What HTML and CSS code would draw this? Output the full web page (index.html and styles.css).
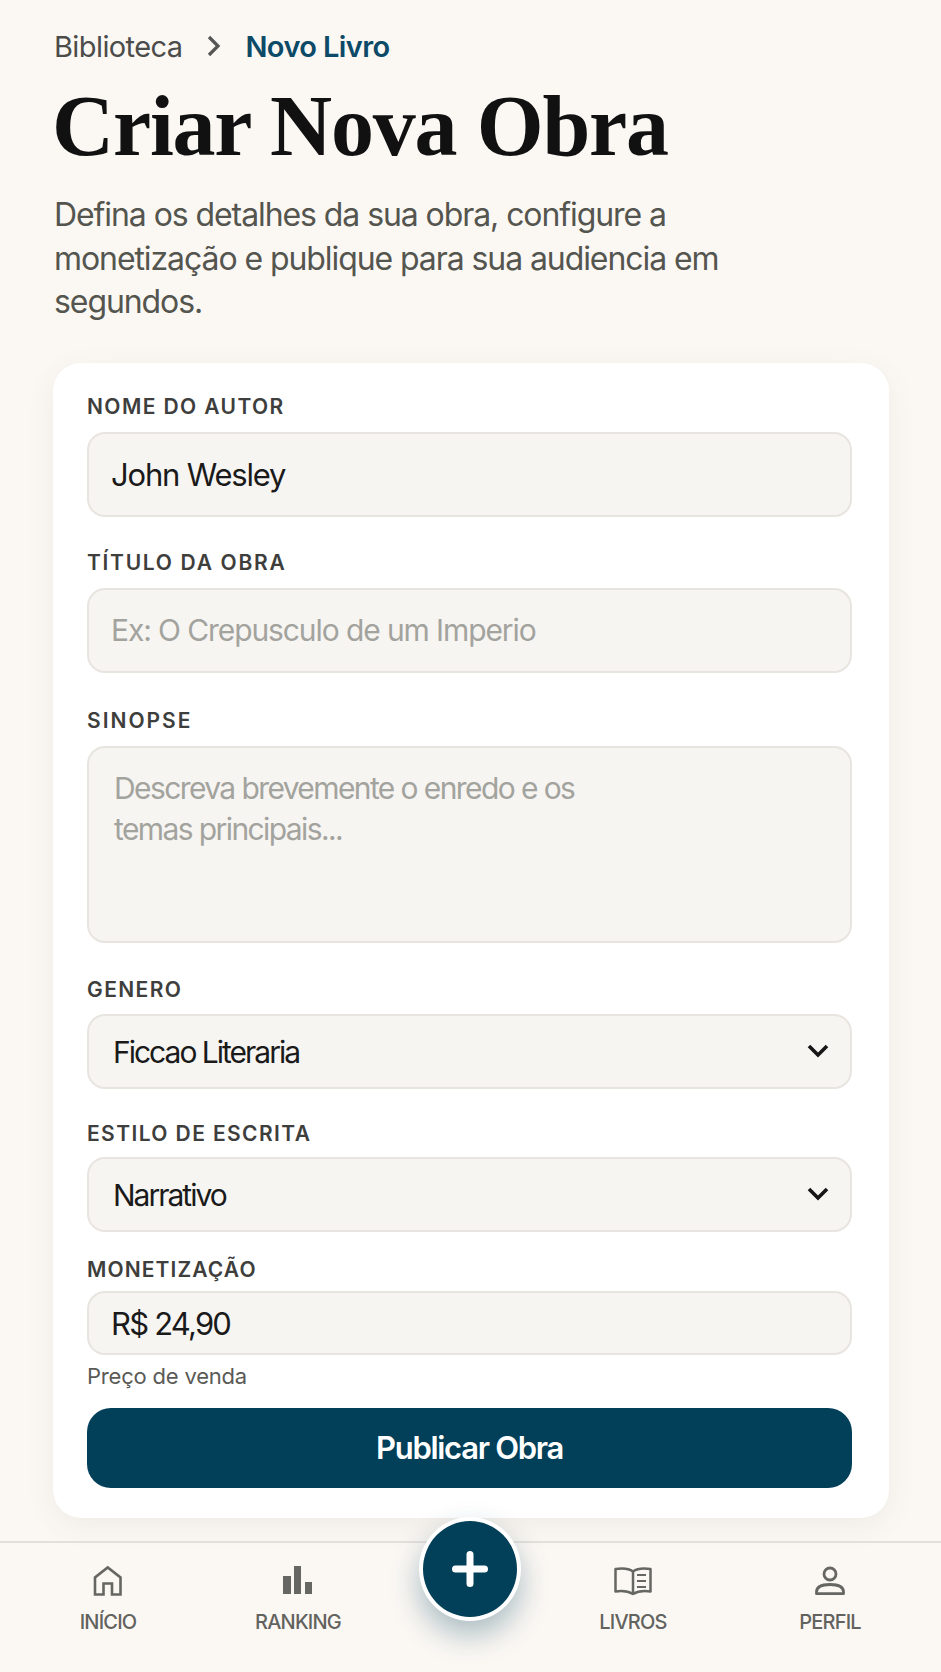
FILE: index.html
```html
<!DOCTYPE html>
<html lang="pt">
<head>
<meta charset="utf-8">
<title>Criar Nova Obra</title>
<link rel="stylesheet" href="styles.css">
</head>
<body>
<main class="page">
  <nav class="crumbs">
    <span class="crumb">Biblioteca</span>
    <svg class="crumb-sep" width="16" height="22" viewBox="0 0 16 22"><path d="M3 2l9 9-9 9" fill="none" stroke="#555553" stroke-width="3.2"/></svg>
    <span class="crumb-current">Novo Livro</span>
  </nav>
  <h1 class="title">Criar Nova Obra</h1>
  <p class="lead">Defina os detalhes da sua obra, configure a monetização e publique para sua audiencia em segundos.</p>
  <form class="card">
    <div class="label l-autor">NOME DO AUTOR</div>
    <div class="field f-text"><span class="val">John Wesley</span></div>
    <div class="label l-titulo">TÍTULO DA OBRA</div>
    <div class="field f-text"><span class="ph ph-line">Ex: O Crepusculo de um Imperio</span></div>
    <div class="label l-sinopse">SINOPSE</div>
    <div class="field f-area"><span class="ph">Descreva brevemente o enredo e os<br>temas principais...</span></div>
    <div class="label l-genero">GENERO</div>
    <div class="field f-select f-genero"><span class="val val-select">Ficcao Literaria</span><svg class="chev" width="24" height="18" viewBox="0 0 24 18"><path d="M3 4l9 9 9-9" fill="none" stroke="#161616" stroke-width="3.6"/></svg></div>
    <div class="label l-estilo">ESTILO DE ESCRITA</div>
    <div class="field f-select f-estilo"><span class="val val-select">Narrativo</span><svg class="chev" width="24" height="18" viewBox="0 0 24 18"><path d="M3 4l9 9 9-9" fill="none" stroke="#161616" stroke-width="3.6"/></svg></div>
    <div class="label l-mon">MONETIZAÇÃO</div>
    <div class="field f-price"><span class="val val-price">R$ 24,90</span></div>
    <div class="hint">Preço de venda</div>
    <button class="publish" type="button">Publicar Obra</button>
  </form>
</main>
<footer class="tabbar">
  <div class="tab">
    <svg class="ico" viewBox="0 0 32 32" width="32" height="32"><path d="M3 29.5V12.5L15.7 2.5 28.5 12.5V29.5H20V18.5H11.5V29.5Z" fill="none" stroke="#666662" stroke-width="2.6"/></svg>
    <span>INÍCIO</span>
  </div>
  <div class="tab">
    <svg class="ico" viewBox="0 0 32 32" width="32" height="32"><path d="M1 11h8v18H1zM12 1h7v28h-7zM23 17h7v12h-7z" fill="#666662"/></svg>
    <span>RANKING</span>
  </div>
  <div class="tab"></div>
  <div class="tab">
    <svg class="ico" viewBox="0 0 40 32" width="40" height="32"><path d="M20 6.5C16 3.5 9 3 2.5 4V26.5C9 25.5 15 26 20 29 25 26 31 25.5 37.5 26.5V4C31 3 24 3.5 20 6.5ZM20 6.5V28" fill="none" stroke="#666662" stroke-width="2.5" stroke-linejoin="round"/><path d="M24 10H33M24 16H33M24 22H33" fill="none" stroke="#666662" stroke-width="2.2"/></svg>
    <span>LIVROS</span>
  </div>
  <div class="tab">
    <svg class="ico" viewBox="0 0 32 32" width="32" height="32"><circle cx="16" cy="9" r="6" fill="none" stroke="#666662" stroke-width="2.8"/><path d="M2.5 28.7V27C2.5 22 8 19.5 16 19.5S29.5 22 29.5 27V28.7Z" fill="none" stroke="#666662" stroke-width="2.8" stroke-linejoin="round"/></svg>
    <span>PERFIL</span>
  </div>
  <button class="fab" type="button" aria-label="Criar">
    <svg width="36" height="36" viewBox="0 0 36 36"><path d="M18 3.5v29M3.5 18h29" stroke="#fff" stroke-width="7" stroke-linecap="round"/></svg>
  </button>
</footer>
</body>
</html>
```
FILE: styles.css
```css
* { box-sizing: border-box; }
html, body { margin: 0; padding: 0; }
body {
  width: 941px;
  height: 1672px;
  overflow: hidden;
  background: #fbf8f4;
  font-family: Inter, "Liberation Sans", sans-serif;
  display: flex;
  flex-direction: column;
}
.page { padding: 27px 52px 0 53px; flex: 1; }
.crumbs { display: flex; align-items: center; height: 38px; margin-left: 1px; font-size: 29px; letter-spacing: -0.6px; }
.crumb { color: #4c4c4a; }
.crumb-sep { margin: 0 23px 0 24px; }
.crumb-current { color: #0c4a68; font-weight: 600; }
.title {
  margin: 15px 0 0 -1px;
  font-family: "Liberation Serif", serif;
  font-weight: 700;
  font-size: 86px;
  line-height: 92px;
  letter-spacing: -1.2px;
  color: #111;
}
.lead {
  margin: 21px 0 0 1px;
  font-size: 32px;
  line-height: 43.6px;
  letter-spacing: -1.08px;
  color: #55554f;
  width: 700px;
}
.card {
  margin-top: 39px;
  height: 1155px;
  background: #fff;
  border-radius: 28px;
  padding: 30px 37px 0 34px;
  box-shadow: 0 8px 30px rgba(90, 70, 40, 0.07);
}
.label {
  font-size: 21px;
  line-height: 28px;
  font-weight: 600;
  letter-spacing: 1.4px;
  color: #3e3e3c;
}
.field {
  display: flex;
  align-items: center;
  justify-content: space-between;
  background: #f7f5f2;
  border: 2px solid #e8e5e0;
  border-radius: 18px;
  padding: 0 22px;
  font-size: 31px;
  letter-spacing: -1.2px;
}
.val { color: #1a1a1a; }
.val-select { letter-spacing: -2px; font-size: 30px; padding-top: 2px; }
.val-price { letter-spacing: -1.8px; padding-top: 2px; }
.ph { color: #a3a39e; font-size: 30px; letter-spacing: -1.6px; }
.ph-line { letter-spacing: -1.1px; }
.f-text { height: 85px; margin-top: 11px; }
.f-area { height: 197px; margin-top: 11px; align-items: flex-start; padding: 20px 25px; line-height: 41px; }
.f-select { height: 75px; padding: 0 20px 0 24px; }
.f-genero { margin-top: 10px; }
.f-estilo { margin-top: 9px; }
.f-price { height: 64px; margin-top: 7px; }
.l-titulo { margin-top: 32px; letter-spacing: 1.7px; }
.l-sinopse { margin-top: 34px; letter-spacing: 2px; }
.l-genero { margin-top: 33px; }
.l-estilo { margin-top: 31px; }
.l-mon { margin-top: 24px; letter-spacing: 1.1px; }
.hint { margin-top: 7px; font-size: 22px; line-height: 28px; letter-spacing: -0.2px; color: #5a5a56; }
.publish {
  display: block;
  width: 100%;
  height: 80px;
  margin-top: 18px;
  border: 0;
  border-radius: 24px;
  background: #023f59;
  color: #fff;
  font: 600 31px Inter, "Liberation Sans", sans-serif;
  letter-spacing: -1.3px;
}
.tabbar {
  position: relative;
  height: 131px;
  flex: none;
  border-top: 2px solid #e3e0db;
  display: grid;
  grid-template-columns: 216px 164px 167px 172px 222px;
}
.tab {
  display: flex;
  flex-direction: column;
  align-items: center;
  padding-top: 22px;
  gap: 13px;
  font-size: 20px;
  line-height: 24px;
  font-weight: 500;
  color: #62625e;
  letter-spacing: -0.8px;
}
.ico { display: block; }
.fab {
  position: absolute;
  left: 419px;
  top: -26px;
  width: 102px;
  height: 104px;
  border-radius: 50%;
  background: #023f59;
  border: 4px solid #fff;
  box-shadow: 0 14px 30px rgba(2, 63, 89, 0.32);
  display: flex;
  align-items: center;
  justify-content: center;
  padding: 0;
}
```
